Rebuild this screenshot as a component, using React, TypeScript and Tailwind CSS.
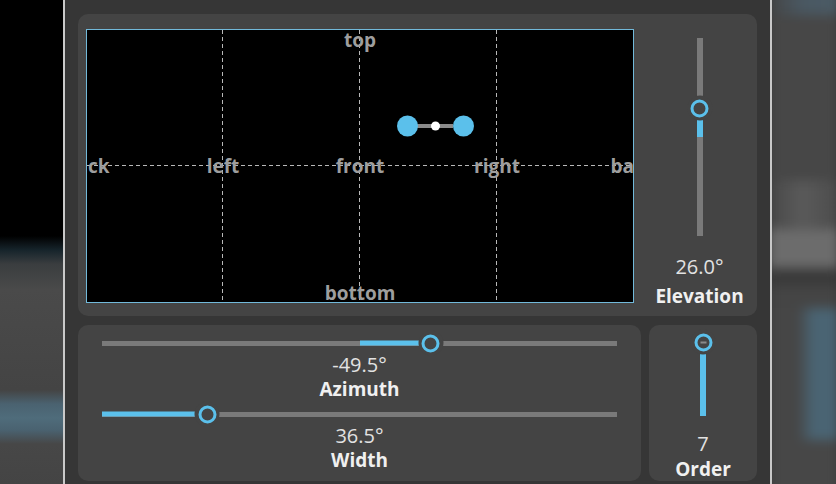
import React from "react";

const BLUE = "#5bc0eb";

function Thumb({ dash = false }: { dash?: boolean }) {
  return (
    <div className="w-[25px] h-[25px] rounded-full bg-[#444444] flex items-center justify-center">
      <div className="w-[18px] h-[18px] rounded-full border-[3px] border-[#5bc0eb] bg-[#444444] flex items-center justify-center">
        {dash && <div className="w-[6px] h-[2px] bg-[#8a8a8a]" />}
      </div>
    </div>
  );
}

function HSlider({ thumb, fillFrom, fillTo }: { thumb: number; fillFrom: number; fillTo: number }) {
  return (
    <div className="relative mx-[24px] h-[20px] flex items-center">
      <div className="w-full h-[5px] bg-[#7a7a7a]" />
      <div
        className="absolute top-1/2 -translate-y-1/2 h-[5px] bg-[#5bc0eb]"
        style={{ left: fillFrom, width: fillTo - fillFrom }}
      />
      <div className="absolute top-1/2 -translate-y-1/2 -translate-x-1/2" style={{ left: thumb }}>
        <Thumb />
      </div>
    </div>
  );
}

function CanvasLabel({ text, x, y }: { text: string; x: number; y: number }) {
  return (
    <span
      className="absolute -translate-x-1/2 whitespace-nowrap text-[19px] leading-[16px] font-bold text-[#9e9e9e]"
      style={{ left: x, top: y }}
    >
      {text}
    </span>
  );
}

function Panner() {
  const W = 546;
  const H = 272;
  return (
    <div className="relative w-[548px] h-[274px] border border-[#72b9da] bg-black overflow-hidden shrink-0">
      <svg className="absolute left-0 top-0" width={W} height={H}>
        <g stroke="#b8b8b8" strokeWidth="1" strokeDasharray="4 3">
          <line x1="135.5" y1="0" x2="135.5" y2={H} />
          <line x1="272.5" y1="0" x2="272.5" y2={H} />
          <line x1="409.5" y1="0" x2="409.5" y2={H} />
          <line x1="0" y1="135.5" x2={W} y2="135.5" />
        </g>
      </svg>
      <CanvasLabel text="top" x={273} y={2} />
      <CanvasLabel text="bottom" x={273} y={255} />
      <CanvasLabel text="back" x={0} y={128} />
      <CanvasLabel text="left" x={136} y={128} />
      <CanvasLabel text="front" x={273} y={128} />
      <CanvasLabel text="right" x={410} y={128} />
      <CanvasLabel text="back" x={546} y={128} />
      <svg className="absolute left-0 top-0" width={W} height={H}>
        <rect x="330" y="94" width="36" height="4" fill="#8a8a8a" />
        <circle cx="320.5" cy="96" r="10.5" fill={BLUE} />
        <circle cx="376.5" cy="96" r="10.5" fill={BLUE} />
        <circle cx="348.5" cy="96" r="4.5" fill="#ffffff" />
      </svg>
    </div>
  );
}

export default function App() {
  return (
    <div className="w-[836px] h-[484px] flex overflow-hidden bg-[#363636] font-['Open_Sans',sans-serif]">
      <div className="w-[63px] h-full bg-[linear-gradient(to_bottom,#000000_0px,#000000_236px,#16242b_250px,#3a3d3f_264px,#4a4a4a_290px,#444444_390px,#4a6270_404px,#4f6c7b_418px,#4a6270_430px,#474747_444px,#444444_484px)]" />
      <div className="w-[2px] h-full bg-[#c9c9c9]" />
      <main className="w-[705px] h-full bg-[#363636] px-[13px] pt-[14px] flex flex-col gap-[9px]">
        <section className="h-[302px] rounded-[10px] bg-[#444444] flex pl-[8px] pt-[15px]">
          <Panner />
          <div className="flex-1 pl-[8px] flex flex-col items-center pt-[9px]">
            <div className="relative w-[26px] h-[198px] flex justify-center">
              <div className="w-[6px] h-full bg-[#7a7a7a]" />
              <div className="absolute left-1/2 -translate-x-1/2 top-[70px] h-[29px] w-[6px] bg-[#5bc0eb]" />
              <div className="absolute left-1/2 top-[70px] -translate-x-1/2 -translate-y-1/2">
                <Thumb />
              </div>
            </div>
            <div className="mt-[19px] text-[20px] leading-[24px] text-[#e2e2e2]">26.0°</div>
            <div className="mt-[5px] text-[19px] leading-[24px] font-bold text-[#f0f0f0]">Elevation</div>
          </div>
        </section>
        <div className="flex gap-[8px] h-[156px]">
          <section className="w-[563px] rounded-[10px] bg-[#444444] pt-[8px] flex flex-col">
            <HSlider thumb={328.5} fillFrom={257.5} fillTo={328.5} />
            <div className="text-center text-[20px] leading-[24px] text-[#e2e2e2]">-49.5°</div>
            <div className="text-center text-[19px] leading-[24px] font-bold text-[#f0f0f0]">Azimuth</div>
            <div className="mt-[3px]">
              <HSlider thumb={105} fillFrom={0} fillTo={105} />
            </div>
            <div className="text-center text-[20px] leading-[24px] text-[#e2e2e2]">36.5°</div>
            <div className="text-center text-[19px] leading-[24px] font-bold text-[#f0f0f0]">Width</div>
          </section>
          <section className="flex-1 rounded-[10px] bg-[#444444] pt-[17px] flex flex-col items-center">
            <div className="relative w-[26px] h-[74px] flex justify-center">
              <div className="w-[6px] h-full bg-[#5bc0eb]" />
              <div className="absolute left-1/2 top-0 -translate-x-1/2 -translate-y-1/2">
                <Thumb dash />
              </div>
            </div>
            <div className="mt-[16px] text-[20px] leading-[24px] text-[#e2e2e2]">7</div>
            <div className="mt-[1px] text-[19px] leading-[24px] font-bold text-[#f0f0f0]">Order</div>
          </section>
        </div>
      </main>
      <div className="w-[2px] h-full bg-[#c9c9c9]" />
      <div className="flex-1 h-full overflow-hidden">
        <div className="h-full flex flex-col blur-[5px] scale-110">
          <div className="h-[36px] bg-[linear-gradient(to_right,#454545_0px,#4a5862_30px,#4b5b66_64px)]" />
          <div className="h-[150px] bg-[#474747]" />
          <div className="h-[44px] bg-[linear-gradient(to_right,#484848_0px,#5a5a5a_30px,#4c4c4c_64px)]" />
          <div className="h-[36px] bg-[#6c6c6c]" />
          <div className="h-[16px] bg-[#3a3a3a]" />
          <div className="h-[20px] bg-[#454545]" />
          <div className="h-[120px] bg-[linear-gradient(to_right,#464646_0px,#464646_26px,#4a6473_40px,#4a6473_64px)]" />
          <div className="flex-1 bg-[#474747]" />
        </div>
      </div>
    </div>
  );
}
